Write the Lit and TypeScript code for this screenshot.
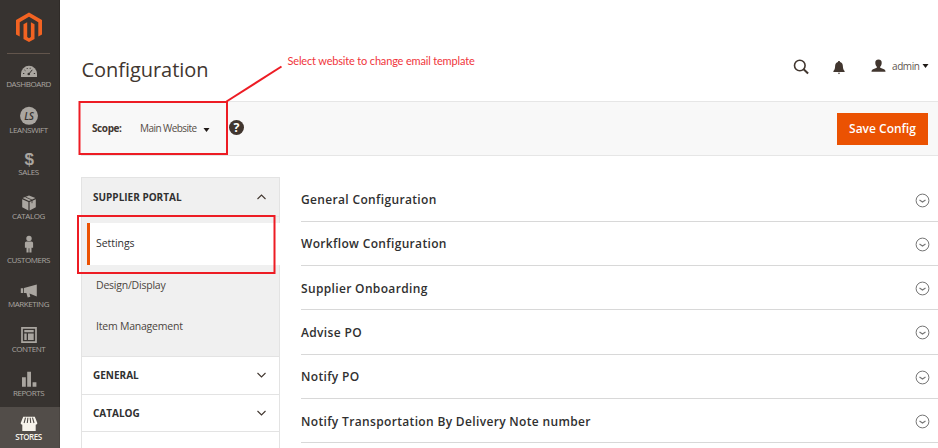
import { LitElement, html, css, svg } from "lit";
import { customElement } from "lit/decorators.js";
import { classMap } from "lit/directives/class-map.js";

const gauge = svg`<path d="M1 15V11.800a8 8 0 0 1 16 0v3.200Z" fill="currentColor"/>
  <path d="M8.300 12.600 12.300 7.800M3 11.500h1.300M4.500 8l.9.700M7 6l.4 1M10.300 5.800l-.2 1M13.800 11.500h1.300" stroke="#373330" stroke-width="1" fill="none"/><circle cx="8.800" cy="12" r="1.300" fill="#373330"/>`;
const badge = svg`<circle cx="9" cy="7.800" r="9" fill="currentColor"/><text x="8.800" y="11.500" class="ls">LS</text>`;
const dollar = svg`<text x="9" y="15.300" class="dollar">$</text>`;
const cube = svg`<path d="m9 1.600 6.400 2.500L9 7.100 2.600 4.100ZM2.200 5.200l6.200 2.900v8.400l-6.200-3.200ZM15.800 5.200l-6.200 2.900v8.400l6.200-3.200Z" fill="currentColor"/><path d="m5.400 3 6.600 3v3.200" stroke="#373330" fill="none" stroke-width=".8"/>`;
const person = svg`<circle cx="9" cy="0.400" r="2.700" fill="currentColor"/><path d="M6.700 3.600h4.600c1.300 0 1.800.8 1.800 1.900v4.200h-1.600v4.800H9.400v-4.200h-.8v4.200H6.500V9.700H4.900V5.500c0-1.100.5-1.900 1.800-1.900Z" fill="currentColor"/>`;
const horn = svg`<path d="M.8 6.300h2.400v4.600H.8ZM4 6.100 16.800 2.500v12L9.500 11.500l.8 3.300-2.600.6L6.400 10.900H4Z" fill="currentColor"/>`;
const layout = svg`<path d="M2 .8h14v14.300H2Z" fill="none" stroke="currentColor" stroke-width="1.700"/><path d="M4.300 3.100h9.400v2.200H4.300ZM4.300 6.500h2.400v6.400H4.300ZM8 6.500h5.700v6.400H8Z" fill="currentColor"/>`;
const bars = svg`<path d="M2 6.300h3.800v9.400H2ZM7.200.7H11v15H7.200ZM12.600 11.300h3.800v4.400h-3.800Z" fill="currentColor"/>`;
const shop = svg`<path d="M3.200 1.700h11.600l2.500 6.300c.2 1.900-2.600 2.200-3.200.7-.5 1.500-2.900 1.500-3.400 0-.4 1.500-2.900 1.500-3.400 0-.5 1.500-2.900 1.500-3.400 0C3.300 10.200.5 9.900.7 8ZM2.300 8.500h13.400V16H2.300Z" fill="currentColor"/><path d="M5.500 2.700 4.100 8M7.900 2.700 7.300 8M10.200 2.700l.5 5.300M12.500 2.700 14 8" stroke="#524d49" stroke-width="1.100"/>`;

const menu = [
  { name: "Dashboard", icon: gauge, cls: "dash" },
  { name: "Leanswift", icon: badge, cls: "lean" },
  { name: "Sales", icon: dollar, cls: "" },
  { name: "Catalog", icon: cube, cls: "" },
  { name: "Customers", icon: person, cls: "" },
  { name: "Marketing", icon: horn, cls: "" },
  { name: "Content", icon: layout, cls: "" },
  { name: "Reports", icon: bars, cls: "" },
  { name: "Stores", icon: shop, cls: "active" },
];

@customElement("side-menu")
class SideMenu extends LitElement {
  static styles = css`
    :host { display: flex; flex-direction: column; width: 60px; height: 448px; overflow: hidden; background: #373330; box-shadow: inset -1px 0 #2f2b28; color: #aaa6a0; }
    .logo { width: 28px; height: 30px; margin: 12px 0 0 15px; flex: none; }
    .rule { width: 43px; height: 1px; background: #62554c; margin: 11px 0 0 7px; flex: none; }
    .item { flex: none; box-sizing: border-box; width: 60px; padding-right: 3px; height: 44.25px; display: flex; flex-direction: column; align-items: center; font: 8px/10px "Open Sans", sans-serif; letter-spacing: -.42px; text-transform: uppercase; }
    .item svg { width: 18px; height: 18px; display: block; margin: 8.500px 0 -1px; overflow: visible; }
    .item span { white-space: nowrap; }
    .dash { height: 46px; margin-top: -1px; }
    .lean { height: 42px; }
    .active { background: #524d49; color: #f7f3eb; font-weight: 600; box-shadow: inset -1px 0 #4a4541; }
    .ls { font: italic 600 10px "Open Sans", sans-serif; fill: #373330; text-anchor: middle; }
    .dollar { font: 700 17px "Liberation Sans", sans-serif; fill: currentColor; text-anchor: middle; }
  `;
  render() {
    return html`
      <svg class="logo" viewBox="0 0 28 30"><path fill="#f26322" d="M14 .5 27 8v14.500L23.300 24.600V10.200L14 4.800 4.700 10.200v14.400L1 22.500V8ZM12.200 10.200v14.900l1.800 1.100 1.900-1.100V10.200l3.600 2v14.700L14 30l-5.500-3.100V12.200Z"/></svg>
      <div class="rule"></div>
      ${menu.map((m) => html`<div class=${classMap({ item: true, [m.cls || "plain"]: true })}><svg viewBox="0 0 18 18">${m.icon}</svg><span>${m.name}</span></div>`)}
    `;
  }
}

const sections = [
  "General Configuration",
  "Workflow Configuration",
  "Supplier Onboarding",
  "Advise PO",
  "Notify PO",
  "Notify Transportation By Delivery Note number",
];

@customElement("app-root")
class AppRoot extends LitElement {
  static styles = css`
    :host { display: flex; position: relative; width: 938px; height: 448px; overflow: hidden; background: #fff; font-family: "Open Sans", sans-serif; color: #41362f; }
    main { flex: 1; min-width: 0; padding-left: 21px; }
    header { height: 101px; display: flex; box-sizing: border-box; padding: 55px 9px 0 0; }
    h1 { margin: 0; font-size: 20px; line-height: 30px; font-weight: 400; letter-spacing: -.05px; flex: 1; padding-left: .5px; }
    header svg { display: block; flex: none; }
    .search { width: 16px; height: 16px; margin: 4px 24px 0 0; }
    .bell { width: 12px; height: 14px; margin: 6px 26px 0 0; }
    .user { width: 15px; height: 14px; margin: 4px 6px 0 0; }
    .admin { font-size: 10px; line-height: 14px; margin-top: 4px; color: #5f5650; width: 26px; letter-spacing: -.4px; }
    .caret { width: 7px; height: 4px; margin: 9px 0 0 4px; }
    .scope { height: 53px; border: solid #e6e6e6; border-width: 1px 0; background: #f8f8f8; display: flex; align-items: center; padding: 0 10px 0 11px; font-size: 10px; }
    .scope b { font-weight: 700; margin-right: 18px; width: 30px; white-space: nowrap; letter-spacing: -.4px; padding-bottom: 1px; }
    .site { width: 57px; white-space: nowrap; color: #554c46; letter-spacing: -.55px; padding-bottom: 1px; }
    .scope .caret { margin: 3px 19px 0 6px; }
    .help { width: 15px; height: 15px; margin-bottom: 2px; }
    .q { font: 700 12.500px "Open Sans", sans-serif; fill: #fff; text-anchor: middle; }
    button { margin-left: auto; border: 0; padding: 0; width: 91px; height: 32px; background: #eb5202; color: #fff; font: 600 12px "Open Sans", sans-serif; letter-spacing: 0; }
    .body { display: flex; gap: 21px; margin-top: 21px; }
    nav { width: 197px; border: 1px solid #e3e3e3; height: 280px; flex: none; }
    .group { display: flex; align-items: center; justify-content: space-between; height: 36.500px; border-bottom: 1px solid #e3e3e3; padding: 0 13px 0 11px; font-size: 10px; font-weight: 700; text-transform: uppercase; color: #303030; }
    .open { background: #f0f0f0; height: 38px; border-color: #e8e8e8; }
    .open span { padding-bottom: 1px; }
    .chev { width: 9px; height: 6px; display: block; }
    .subs { background: #f0f0f0; height: 140px; box-sizing: border-box; padding-top: 6px; border-bottom: 1px solid #e3e3e3; font-size: 10.500px; letter-spacing: -.22px; color: #4b4540; }
    .sub { height: 41px; line-height: 41px; padding-left: 14px; }
    .current { height: 42px; background: #fff; margin: 0 -1px 0 5px; padding-left: 6px; border-left: 3px solid #eb5202; color: #303030; font-weight: 500; letter-spacing: -.05px; }
    .list { flex: 1; padding-top: .400px; }
    .row { height: 43.300px; border-bottom: 1px solid #d8d8d8; display: flex; align-items: center; justify-content: space-between; padding-right: 8px; font-size: 12px; font-weight: 600; letter-spacing: .34px; color: #303030; }
    .row span { padding-top: 1px; }
    .round { width: 15px; height: 15px; display: block; margin-top: 2px; }
    .marks { position: absolute; left: 0; top: 0; width: 938px; height: 448px; }
    .note { position: absolute; left: 287.500px; top: 53px; font: 11px/16px Lato, sans-serif; letter-spacing: -.17px; color: #f0353c; white-space: nowrap; }
  `;
  caret() {
    return html`<svg class="caret" viewBox="0 0 7 4"><path d="M.5 0h6l-3 4Z" fill="#201a17"/></svg>`;
  }
  chev(up: boolean) {
    return html`<svg class="chev" viewBox="0 0 9 6"><path d=${up ? "M.5 5 4.500 1l4 4" : "M.5 1l4 4 4-4"} fill="none" stroke="#41362f" stroke-width="1.100"/></svg>`;
  }
  render() {
    return html`
      <side-menu></side-menu>
      <main>
        <header>
          <h1>Configuration</h1>
          <svg class="search" viewBox="0 0 16 16" fill="none" stroke="#41362f"><circle cx="6.800" cy="6.500" r="5.300" stroke-width="1.600"/><path d="m10.600 10.300 4.500 4.200" stroke-width="2"/></svg>
          <svg class="bell" viewBox="0 0 12 14" fill="#41362f"><path d="M6 0c.8 0 1 .5 1.100 1C9.500 1.600 9.800 3.500 9.900 5.500c.1 2.300.7 3.500 1.700 4.500v1H.4v-1c1-1 1.600-2.200 1.700-4.500C2.200 3.500 2.500 1.600 4.900 1 5 .5 5.200 0 6 0ZM4.800 11.700h2.400L6 13.200Z"/></svg>
          <svg class="user" viewBox="0 0 15 14" fill="#41362f"><path d="M7.500.5c2.200 0 3.400 1.500 3.200 3.500-.1 1.800-.7 3-1.500 3.800v1l3.800 1.400c1.100.4 1.500 1.300 1.500 2.600H.5c0-1.300.4-2.200 1.500-2.600l3.800-1.400v-1C5 7 4.400 5.800 4.300 4 4.100 2 5.300.5 7.500.5Z"/></svg>
          <span class="admin">admin</span>${this.caret()}
        </header>
        <div class="scope">
          <b>Scope:</b><span class="site">Main Website</span>${this.caret()}
          <svg class="help" viewBox="0 0 15 15"><circle cx="7.500" cy="7.500" r="7.500" fill="#41362f"/><text class="q" x="7.500" y="12">?</text></svg>
          <button>Save Config</button>
        </div>
        <div class="body">
          <nav>
            <div class="group open"><span>Supplier Portal</span>${this.chev(true)}</div>
            <div class="subs">
              <div class="sub current">Settings</div>
              <div class="sub">Design/Display</div>
              <div class="sub">Item Management</div>
            </div>
            <div class="group"><span>General</span>${this.chev(false)}</div>
            <div class="group"><span>Catalog</span>${this.chev(false)}</div>
          </nav>
          <div class="list">
            ${sections.map((s) => html`<div class="row"><span>${s}</span><svg class="round" viewBox="0 0 15 15" fill="none" stroke="#757575"><circle cx="7.500" cy="7.500" r="6.400" stroke-width="1"/><path d="m4.500 7 3 2 3-2" stroke-width="1.100"/></svg></div>`)}
          </div>
        </div>
      </main>
      <svg class="marks" viewBox="0 0 938 448" fill="none" stroke="#ed1c24" stroke-width="2"><rect x="79.500" y="102" width="147.500" height="52"/><path d="M226.500 101.500 281.500 66.500"/><rect x="78" y="216" width="196.500" height="57"/></svg>
      <div class="note">Select website to change email template</div>
    `;
  }
}
